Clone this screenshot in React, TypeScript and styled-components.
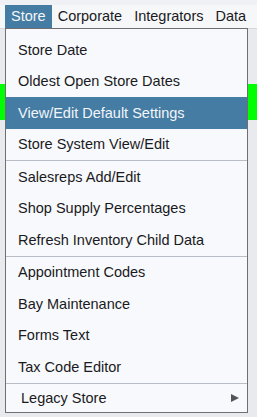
import React from "react";
import styled, { createGlobalStyle } from "styled-components";

const GlobalStyle = createGlobalStyle`
  html, body {
    margin: 0;
    padding: 0;
    background: #e9eaee;
    font-family: "Liberation Sans", Arial, sans-serif;
  }
`;

const Page = styled.div`
  position: relative;
  width: 257px;
  height: 417px;
  overflow: hidden;
  background: #e9eaee;
`;

const TopStrip = styled.div`
  height: 5px;
  background: #eff1f4;
`;

const MenuBar = styled.div`
  display: flex;
  height: 23px;
  padding-left: 5px;
  background: #f6f7f9;
  border-bottom: 1px solid #d6d8dd;
`;

const BarItem = styled.div<{ $active?: boolean }>`
  padding: 0 6px;
  font-size: 14.5px;
  line-height: 23px;
  white-space: nowrap;
  color: ${(p) => (p.$active ? "#f4f7fa" : "#1a1a22")};
  background: ${(p) => (p.$active ? "#457ca3" : "transparent")};
`;

const Content = styled.div`
  padding-top: 55px;
`;

const GreenBand = styled.div`
  height: 36px;
  background: #00ff00;
`;

const Dropdown = styled.div`
  position: absolute;
  top: 28px;
  left: 5px;
  width: 243px;
  height: 385px;
  box-sizing: border-box;
  background: #f8f9fc;
  border: 1px solid #6f6f72;
  padding-top: 5px;
  display: flex;
  flex-direction: column;
`;

const Item = styled.div<{ $active?: boolean }>`
  height: 31.5px;
  flex: none;
  display: flex;
  align-items: center;
  padding-left: 12px;
  font-size: 14.5px;
  white-space: nowrap;
  color: ${(p) => (p.$active ? "#f2f5f9" : "#1a1a22")};
  background: ${(p) => (p.$active ? "#457ca3" : "transparent")};
`;

const SubItem = styled(Item)`
  height: 28px;
  justify-content: space-between;
  padding-left: 15px;
  padding-right: 8px;
`;

const Separator = styled.div`
  height: 1px;
  flex: none;
  background: #b9bdc5;
`;

const Arrow = styled.span`
  width: 0;
  height: 0;
  border-top: 4.5px solid transparent;
  border-bottom: 4.5px solid transparent;
  border-left: 8px solid #555558;
`;

const groups: string[][] = [
  ["Store Date", "Oldest Open Store Dates", "View/Edit Default Settings", "Store System View/Edit"],
  ["Salesreps Add/Edit", "Shop Supply Percentages", "Refresh Inventory Child Data"],
  ["Appointment Codes", "Bay Maintenance", "Forms Text", "Tax Code Editor"],
];

export default function App() {
  return (
    <Page>
      <GlobalStyle />
      <TopStrip />
      <MenuBar>
        <BarItem $active>Store</BarItem>
        <BarItem>Corporate</BarItem>
        <BarItem>Integrators</BarItem>
        <BarItem>Data</BarItem>
      </MenuBar>
      <Content>
        <GreenBand />
      </Content>
      <Dropdown>
        {groups.map((g, gi) => (
          <React.Fragment key={gi}>
            {g.map((label) => (
              <Item key={label} $active={label === "View/Edit Default Settings"}>
                {label}
              </Item>
            ))}
            <Separator />
          </React.Fragment>
        ))}
        <SubItem>
          <span>Legacy Store</span>
          <Arrow />
        </SubItem>
      </Dropdown>
    </Page>
  );
}
